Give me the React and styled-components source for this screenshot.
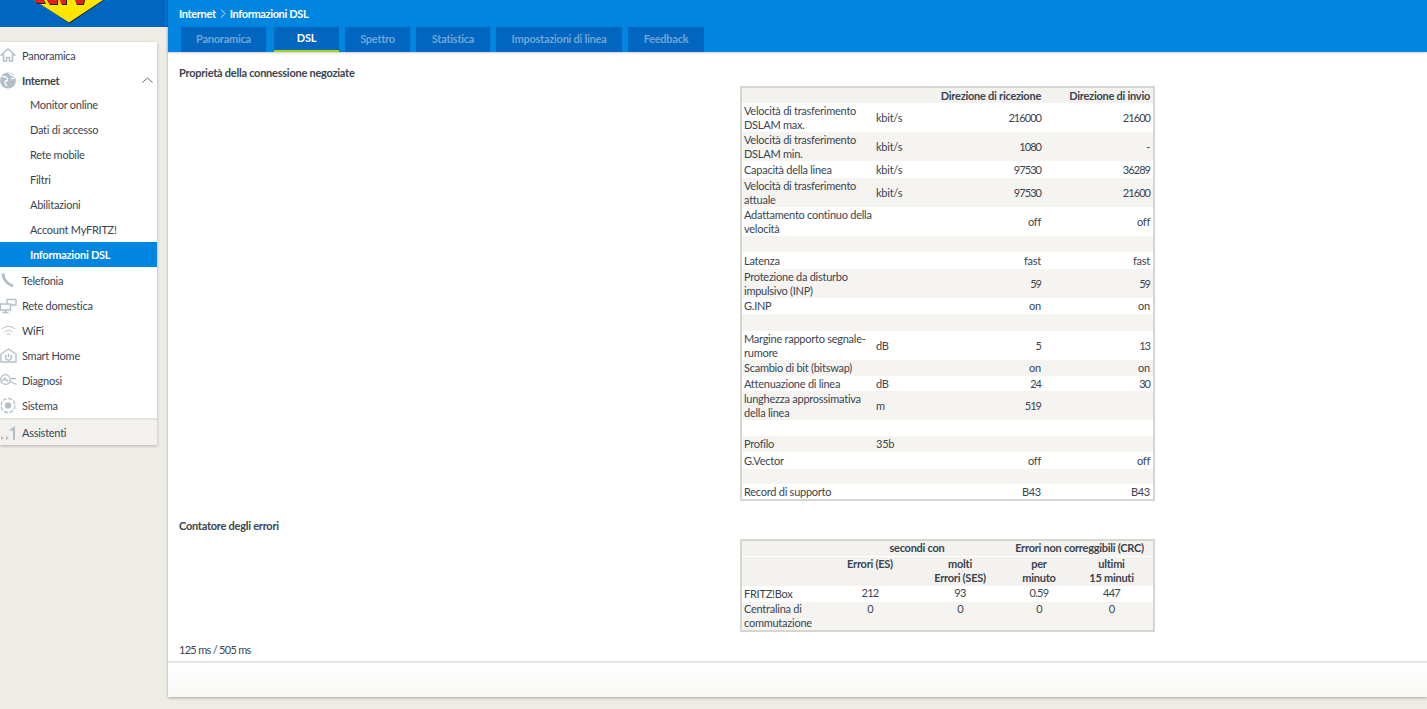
import React from 'react'
import styled, { createGlobalStyle } from 'styled-components'

const GlobalStyle = createGlobalStyle`
  html, body {
    margin: 0;
    height: 100%;
    background: #efece6;
    overflow: hidden;
  }
  body {
    font-family: "Lato", "Noto Sans", sans-serif;
    font-size: 11px;
    letter-spacing: -0.25px;
    color: #3a4450;
  }
`

const Page = styled.div`
  display: flex;
  width: 1427px;
  height: 709px;
`

const LeftColumn = styled.aside`
  width: 168px;
  flex: none;
`

const LogoBar = styled.div`
  height: 27px;
  background: linear-gradient(to right, #0066c0 163px, #0059ab 163px 164px, #0070cc 164px);
  margin-bottom: 15px;
  overflow: hidden;
`

const Nav = styled.nav`
  width: 157px;
  background: #fff;
  box-shadow: 0 1px 3px rgba(0, 0, 0, 0.25);
`

const NavItem = styled.div`
  display: flex;
  align-items: center;
  height: ${p => p.$h || 25}px;
  padding-left: ${p => (p.$sub ? 30 : 0)}px;
  padding-right: 4px;
  font-weight: ${p => (p.$bold ? 700 : 400)};
  color: ${p => (p.$active ? '#fff' : '#3a4450')};
  background: ${p => (p.$active ? '#0086e0' : 'transparent')};
  svg.icon {
    width: 17px;
    height: 17px;
    margin-right: 5px;
    flex: none;
  }
`

const Spacer = styled.span`
  flex: 1;
`

const AssistBar = styled(NavItem)`
  background: #f3f1ed;
  border-top: 2px solid #e2e2e0;
  height: 25px;
`

const RightColumn = styled.main`
  flex: 1;
  display: flex;
  flex-direction: column;
  height: 697px;
  background: #fff;
  box-shadow: 0 1px 3px rgba(0, 0, 0, 0.3);
`

const Crumbs = styled.div`
  flex: none;
  height: 27px;
  display: flex;
  align-items: center;
  gap: 4px;
  padding-left: 11px;
  background: #0086e0;
  color: #fff;
  font-weight: 700;
  letter-spacing: -0.35px;
`

const Tabs = styled.div`
  flex: none;
  height: 25px;
  display: flex;
  padding-left: 13px;
  background: #0086e0;
  box-shadow: 0 1px 2px rgba(0, 0, 0, 0.2);
`

const Tab = styled.div`
  width: ${p => p.$w}px;
  margin-right: ${p => p.$gap}px;
  padding-bottom: 2px;
  display: flex;
  align-items: center;
  justify-content: center;
  background: #0066c0;
  color: ${p => (p.$active ? '#fff' : '#6fa5d8')};
  font-weight: 700;
  border-bottom: ${p => (p.$active ? '2px solid #a8d21c' : '0')};
  box-sizing: border-box;
`

const Content = styled.section`
  flex: 1;
  padding: 14px 11px 0;
`

const Heading = styled.h2`
  margin: ${p => p.$top || 0}px 0 0;
  font-size: 11px;
  line-height: 13px;
  font-weight: 700;
`

const DataTable = styled.table`
  margin: ${p => p.$top}px 0 0 561px;
  width: 415px;
  table-layout: fixed;
  border-collapse: collapse;
  border: 2px solid #d6d6d0;
  font-size: 11px;
  line-height: 14px;
  td, th {
    padding: 0 3px 0 1px;
    font-weight: 400;
  }
  td:first-child {
    padding: 0 0 0 2px;
  }
  th {
    font-weight: 700;
  }
`

const Row = styled.tr`
  background: ${p => (p.$alt ? '#f5f4f0' : '#fff')};
  height: ${p => p.$h}px;
`

const HeadRow = styled.tr`
  background: #f3f2ee;
  height: ${p => p.$h}px;
  border-bottom: ${p => (p.$line ? '1px solid #fff' : '0')};
`

const Num = styled.td`
  text-align: right;
  letter-spacing: ${p => (p.$digits ? '-0.95px' : '-0.25px')};
`

const HeadNum = styled.th`
  text-align: right;
`

const Center = styled.td`
  text-align: center;
  vertical-align: top;
  letter-spacing: -0.7px;
`

const HeadCenter = styled.th`
  text-align: center;
  vertical-align: top;
`

const Footnote = styled.div`
  margin-top: 11px;
  line-height: 14px;
  letter-spacing: -0.7px;
`

const Bottom = styled.footer`
  flex: none;
  height: 34px;
  border-top: 2px solid #e4e4e2;
  background: linear-gradient(#fff, #f8f8f6);
`

const Icon = ({ children, stroke = '#b3bfc8', width = 1.3 }) => (
  <svg className="icon" viewBox="0 0 17 17" fill="none" stroke={stroke} strokeWidth={width}>{children}</svg>
)

const rows1 = [
  ['Velocità di trasferimento DSLAM max.', 'kbit/s', '216000', '21600', 29],
  ['Velocità di trasferimento DSLAM min.', 'kbit/s', '1080', '-', 29],
  ['Capacità della linea', 'kbit/s', '97530', '36289', 17],
  ['Velocità di trasferimento attuale', 'kbit/s', '97530', '21600', 29],
  ['Adattamento continuo della velocità', '', 'off', 'off', 29],
  ['', '', '', '', 16],
  ['Latenza', '', 'fast', 'fast', 17],
  ['Protezione da disturbo impulsivo (INP)', '', '59', '59', 29],
  ['G.INP', '', 'on', 'on', 16],
  ['', '', '', '', 17],
  ['Margine rapporto segnale-rumore', 'dB', '5', '13', 29],
  ['Scambio di bit (bitswap)', '', 'on', 'on', 16],
  ['Attenuazione di linea', 'dB', '24', '30', 15],
  ['lunghezza approssimativa della linea', 'm', '519', '', 29],
  ['', '', '', '', 16],
  ['Profilo', '35b', '', '', 16],
  ['G.Vector', '', 'off', 'off', 17],
  ['', '', '', '', 15],
  ['Record di supporto', '', 'B43', 'B43', 16],
]

const subItems = ['Monitor online', 'Dati di accesso', 'Rete mobile', 'Filtri', 'Abilitazioni', 'Account MyFRITZ!']

const hasDigits = s => /^\d+$/.test(s)

const App = () => {
  return <>
    <GlobalStyle />
    <Page>
      <LeftColumn>
        <LogoBar>
          <svg width="163" height="27" viewBox="0 0 163 27">
            <path d="M35 0H104L69.5 23.5Z" fill="#222" />
            <path d="M34 0H103L69 22.5Z" fill="#ffe600" />
            <path d="M35 0h9l2 4h-9zM47 0h11v5h-8zM61 0h6v5h-5zM75 0h10l-1 5h-7z" fill="#222" />
            <path d="M35 0h8l2 3h-8zM47 0h10v4h-7zM60 0h6v4h-5zM75 0h9l-1 4h-6z" fill="#e2231a" />
          </svg>
        </LogoBar>
        <Nav>
          <NavItem $h={26}>
            <Icon width={1.5}><path d="M1.5 9V7.5L8 2l6.5 5.5V9M3.5 7v7h3v-3.5h3V14h3V7" /></Icon>Panoramica
          </NavItem>
          <NavItem $bold $h={24}>
            <Icon>
              <circle cx="8" cy="8.5" r="8" fill="#b3bfc8" stroke="none" />
              <path d="M2 5c2-1 4 0 5 1s1 3-1 3-1 3 1 5M9 1c1 2 3 2 6 4-1 2-3 2-4 1" stroke="#fff" />
            </Icon>
            Internet
            <Spacer />
            <svg width="11" height="6" viewBox="0 0 11 6" fill="none" stroke="#667"><path d="M0.5 5.5L5.5 1l5 4.5" /></svg>
          </NavItem>
          {subItems.map(s => <NavItem key={s} $sub>{s}</NavItem>)}
          <NavItem $sub $active $bold>Informazioni DSL</NavItem>
          <NavItem $h={26}>
            <Icon width={3}><path d="M3 1.5C3 7 7 12 13 14" /></Icon>Telefonia
          </NavItem>
          <NavItem>
            <Icon><path d="M0.5 7h10v6h-10zM5.5 13v2M2.5 15.5h6M7 7V2.5h9V8h-5.5" /></Icon>Rete domestica
          </NavItem>
          <NavItem>
            <Icon width={1}><path d="M2 7c3.500-3.500 9.500-3.500 13 0M4.500 10c2.500-2 5.500-2 8 0M6.500 12.500c1-1 3-1 4 0" /></Icon>WiFi
          </NavItem>
          <NavItem>
            <Icon width={1.4}><path d="M1 7l7.500-5L16 7v8H1z" /><path d="M6.500 8a3 3 0 1 0 4 0M8.500 6.500V10" /></Icon>Smart Home
          </NavItem>
          <NavItem>
            <Icon><circle cx="5.500" cy="7.500" r="4.800" /><path d="M2 8h2l1-2 2 3 1-1M10 9.500l6.500 3M11 6.500h5" /></Icon>Diagnosi
          </NavItem>
          <NavItem>
            <Icon><circle cx="8" cy="8.500" r="7" strokeDasharray="4 1.500" /><circle cx="8" cy="8.500" r="3.200" fill="#b3bfc8" stroke="none" /></Icon>Sistema
          </NavItem>
          <AssistBar>
            <Icon><path d="M1 12l3 2-3 2zM6 12l3 2-3 2zM15 2v14h-2V7l-4-1z" fill="#b3bfc8" stroke="none" /></Icon>Assistenti
          </AssistBar>
        </Nav>
      </LeftColumn>
      <RightColumn>
        <Crumbs>
          Internet
          <svg width="6" height="9" viewBox="0 0 6 9" fill="none" stroke="#cfe6f8"><path d="M1 0.5l4 4-4 4" /></svg>
          Informazioni DSL
        </Crumbs>
        <Tabs>
          <Tab $w={85} $gap={8}>Panoramica</Tab>
          <Tab $w={65} $gap={6} $active>DSL</Tab>
          <Tab $w={65} $gap={6}>Spettro</Tab>
          <Tab $w={74} $gap={6}>Statistica</Tab>
          <Tab $w={126} $gap={6}>Impostazioni di linea</Tab>
          <Tab $w={76} $gap={0}>Feedback</Tab>
        </Tabs>
        <Content>
          <Heading>Proprietà della connessione negoziate</Heading>
          <DataTable $top={7}>
            <colgroup>
              <col style={{ width: 134 }} /><col style={{ width: 50 }} /><col style={{ width: 119 }} /><col />
            </colgroup>
            <tbody>
              <HeadRow $h={16}>
                <th /><th /><HeadNum>Direzione di ricezione</HeadNum><HeadNum>Direzione di invio</HeadNum>
              </HeadRow>
              {rows1.map((r, i) => (
                <Row key={i} $alt={i % 2 === 1} $h={r[4]}>
                  <td>{r[0]}</td><td>{r[1]}</td>
                  <Num $digits={hasDigits(r[2])}>{r[2]}</Num><Num $digits={hasDigits(r[3])}>{r[3]}</Num>
                </Row>
              ))}
            </tbody>
          </DataTable>
          <Heading $top={18}>Contatore degli errori</Heading>
          <DataTable $top={7}>
            <colgroup>
              <col style={{ width: 87 }} /><col style={{ width: 86 }} /><col style={{ width: 94 }} /><col style={{ width: 64 }} /><col />
            </colgroup>
            <tbody>
              <HeadRow $h={16} $line>
                <th /><HeadCenter colSpan={2}>secondi con</HeadCenter><HeadCenter colSpan={2}>Errori non correggibili (CRC)</HeadCenter>
              </HeadRow>
              <HeadRow $h={30}>
                <th /><HeadCenter>Errori (ES)</HeadCenter><HeadCenter>molti<br />Errori (SES)</HeadCenter><HeadCenter>per<br />minuto</HeadCenter><HeadCenter>ultimi<br />15 minuti</HeadCenter>
              </HeadRow>
              <Row $h={16}>
                <td>FRITZ!Box</td><Center>212</Center><Center>93</Center><Center>0.59</Center><Center>447</Center>
              </Row>
              <Row $alt $h={29}>
                <td>Centralina di commutazione</td><Center>0</Center><Center>0</Center><Center>0</Center><Center>0</Center>
              </Row>
            </tbody>
          </DataTable>
          <Footnote>125 ms / 505 ms</Footnote>
        </Content>
        <Bottom />
      </RightColumn>
    </Page>
  </>
}

export default App
